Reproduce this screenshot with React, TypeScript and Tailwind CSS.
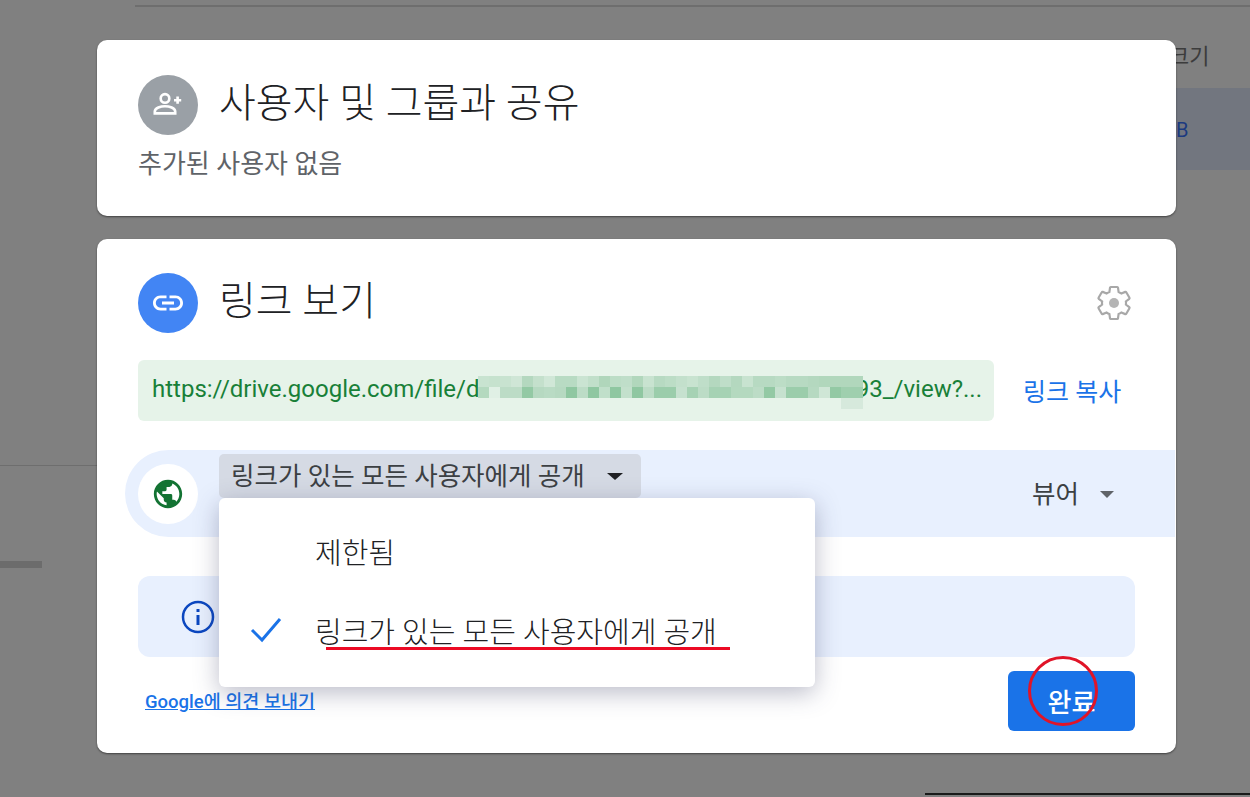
const FONT = 'font-["Roboto","Noto_Sans_CJK_KR",sans-serif]';

const mosaicTop = [
  '#c8e3d0', '#c6e2ce', '#c8e3d0', '#cfe6d6', '#b4d8bf', '#c4e0cc', '#d0e7d7', '#b8dbc3', '#b8dbc3', '#cae4d2', '#c1dfca', '#b0d6bb',
  '#bcddc6', '#bfdec9', '#b1d7bc', '#c8e3d0', '#b7dac2', '#bcddc6', '#c3e0cc', '#c8e3d0', '#bfdec9', '#b4d8bf', '#bfdec9', '#b4d8bf',
  '#c8e3d0', '#b7dac2', '#b7dac2', '#bcddc6', '#b7dac2', '#b7dac2', '#b4d8bf', '#b1d7bc', '#b1d7bc', '#b1d7bc', '#b1d7bc',
];
const mosaicBottom = [
  '#b4d9bf', '#e0f0e5', '#bcdcc6', '#bcdcc6', '#93c9a4', '#b6d9c1', '#b9dbc4', '#b6d9c1', '#8fc7a1', '#bcdcc6', '#8fc7a1', '#c0dfca',
  '#8fc7a1', '#c3e0cc', '#8fc7a1', '#bcdcc6', '#9bcdab', '#9bcdab', '#c6e1cf', '#a6d2b4', '#bcdcc6', '#a6d2b4', '#a6d2b4', '#b4d9bf',
  '#b4d9bf', '#bcdcc6', '#93c9a4', '#c6e1cf', '#9bcdab', '#9bcdab', '#b6d9c1', '#cfe6d6', '#93c9a4', '#9fcfae', '#9fcfae',
];

function Mosaic({ cells }: { cells: string[] }) {
  return (
    <div className="flex h-[11px]">
      {cells.map((c, i) => (
        <div key={i} className="w-[11px] shrink-0" style={{ backgroundColor: c }} />
      ))}
    </div>
  );
}

export default function App() {
  return (
    <div className={`relative h-[797px] w-[1250px] overflow-hidden bg-[#808080] ${FONT}`}>
      {/* page behind the dialog */}
      <div className="absolute left-[135px] right-0 top-[5px] h-[2px] bg-[#6e6e6e]" />
      <div className="absolute left-[1169px] top-[40px] text-[22px] text-[#3c3c3c]">크기</div>
      <div className="absolute left-[1176px] right-0 top-[88px] h-[82px] bg-[#72767f] pt-[27px] text-[20px] text-[#1c3a80]">B</div>
      <div className="absolute left-0 top-[465px] h-[1px] w-[97px] bg-[#6e6e6e]" />
      <div className="absolute left-0 top-[561px] h-[7px] w-[42px] bg-[#6c6c6c]" />
      <div className="absolute bottom-[2px] left-[925px] right-0 h-[2px] bg-[#1a1a1a]" />

      <div className="relative flex flex-col gap-[23px] pl-[97px] pt-[40px]">
        <section className="h-[176px] w-[1079px] rounded-[10px] bg-white px-[41px] pt-[35px] shadow-[0_1px_2px_rgba(0,0,0,0.5)]">
          <div className="flex items-center gap-[21px]">
            <div className="flex h-[60px] w-[60px] items-center justify-center rounded-full bg-[#9aa0a6]">
              <svg width="36" height="36" viewBox="0 0 30 30" fill="none" stroke="white" strokeWidth="2.200">
                <circle cx="12.5" cy="9.5" r="3.6" />
                <path d="M4 22v-1.5c0-3 5-4.500 8.500-4.500s8.500 1.500 8.500 4.500V22z" />
                <path d="M20 11h6M23 8v6" />
              </svg>
            </div>
            <h2 className="mb-[3px] text-[40px] leading-[50px] font-light text-[#202124]">사용자 및 그룹과 공유</h2>
          </div>
          <p className="mt-[15px] text-[26px] leading-[28px] text-[#5f6368]">추가된 사용자 없음</p>
        </section>

        <section className="relative h-[514px] w-[1079px] rounded-[10px] bg-white pt-[34px] shadow-[0_1px_2px_rgba(0,0,0,0.5)]">
          <div className="flex items-center pl-[41px] pr-[42px]">
            <div className="flex h-[60px] w-[60px] items-center justify-center rounded-full bg-[#4285f4]">
              <svg width="36" height="36" viewBox="0 0 24 24" fill="white">
                <path d="M3.900 12c0-1.710 1.390-3.100 3.100-3.100h4V7H7c-2.760 0-5 2.240-5 5s2.240 5 5 5h4v-1.900H7c-1.710 0-3.100-1.390-3.100-3.100zM8 13h8v-2H8v2zm9-6h-4v1.900h4c1.710 0 3.100 1.390 3.100 3.100s-1.390 3.100-3.100 3.100h-4V17h4c2.760 0 5-2.240 5-5s-2.240-5-5-5z" />
              </svg>
            </div>
            <h2 className="mb-[3px] ml-[21px] flex-1 text-[40px] leading-[50px] font-light text-[#202124]">링크 보기</h2>
            <svg className="ml-[1px]" width="40" height="40" viewBox="0 0 24 24" fill="none" stroke="#a8a8a8" strokeWidth="1.300">
              <path d="M19.140 12.940c.040-.300.060-.610.060-.940s-.020-.640-.070-.940l2.030-1.580a.49.490 0 0 0 .120-.610l-1.920-3.320a.49.490 0 0 0-.590-.220l-2.390.960a7.030 7.030 0 0 0-1.620-.940l-.360-2.540a.48.480 0 0 0-.480-.410h-3.840a.470.470 0 0 0-.470.410l-.360 2.540c-.590.240-1.130.570-1.620.940l-2.390-.960a.480.480 0 0 0-.590.220L2.740 8.870a.470.470 0 0 0 .120.610l2.030 1.580c-.050.300-.090.630-.090.940s.020.640.070.940l-2.030 1.580a.49.490 0 0 0-.120.610l1.920 3.320c.120.220.370.290.590.220l2.390-.960c.500.380 1.030.700 1.620.940l.360 2.540c.050.240.240.410.480.410h3.840c.240 0 .440-.170.470-.410l.360-2.540c.590-.240 1.130-.560 1.620-.940l2.390.960c.220.080.470 0 .590-.220l1.920-3.320a.470.470 0 0 0-.120-.610l-2.010-1.580z" />
              <circle cx="12" cy="12" r="3" fill="#b4b4b4" stroke="none" />
            </svg>
          </div>

          <div className="mt-[27px] flex items-center pl-[41px]">
            <div className="relative flex h-[61px] w-[856px] items-center overflow-hidden rounded-[6px] bg-[#e6f3e9] pb-[3px] pl-[14px] text-[24px] text-[#188038]">
              <span className="whitespace-nowrap">https://drive.google.com/file/d</span>
              <span className="absolute right-[12px] whitespace-nowrap">93_/view?...</span>
              <div className="absolute left-[340px] top-[16px]">
                <Mosaic cells={mosaicTop} />
                <Mosaic cells={mosaicBottom} />
                <div className="ml-[363px] h-[11px] w-[22px] bg-[#d6e9dc]" />
              </div>
            </div>
            <span className="ml-[29px] pt-[4px] text-[25px] text-[#1a73e8]">링크 복사</span>
          </div>

          <div className="relative ml-[28px] mr-[1px] mt-[29px] flex h-[87px] items-center rounded-l-[44px] bg-[#e8f0fe] pl-[13px]">
            <div className="flex h-[60px] w-[60px] items-center justify-center rounded-full bg-white">
              <svg width="34" height="34" viewBox="0 0 24 24" fill="#137333">
                <path d="M12 2C6.480 2 2 6.480 2 12s4.480 10 10 10 10-4.480 10-10S17.520 2 12 2zm-1 17.930c-3.950-.490-7-3.850-7-7.930 0-.620.080-1.210.210-1.790L9 15v1c0 1.100.900 2 2 2v1.930zm6.900-2.540c-.260-.810-1-1.390-1.900-1.390h-1v-3c0-.550-.450-1-1-1H8v-2h2c.550 0 1-.450 1-1V7h2c1.100 0 2-.900 2-2v-.410c2.930 1.190 5 4.060 5 7.410 0 2.080-.800 3.970-2.100 5.390z" />
              </svg>
            </div>
            <div className="mb-[35px] ml-[21px] flex h-[44px] w-[422px] items-center whitespace-nowrap rounded-[5px] bg-[#d5dae4] pl-[12px] text-[25.5px] text-[#3c4043]">
              <span>링크가 있는 모든 사용자에게 공개</span>
              <span className="ml-[22px] h-0 w-0 border-x-[8px] border-t-[7px] border-x-transparent border-t-[#202124]" />
            </div>
            <div className="ml-auto mr-[61px] flex items-center pt-[2px] text-[25.5px] text-[#3c4043]">
              뷰어
              <span className="ml-[21px] h-0 w-0 border-x-[7px] border-t-[7px] border-x-transparent border-t-[#5f6368]" />
            </div>
          </div>

          <div className="ml-[41px] mt-[39px] flex h-[81px] w-[997px] items-center rounded-[12px] bg-[#e8f0fe] pl-[42px]">
            <svg width="36" height="36" viewBox="0 0 36 36" fill="none" stroke="#0b47c0" strokeWidth="2.500">
              <circle cx="18" cy="18" r="15" />
              <path d="M18 16v10M18 10v3" strokeWidth="3" />
            </svg>
          </div>

          <div className="flex items-end justify-between pl-[48px] pr-[41px] pt-[14px]">
            <a className="mb-[17px] text-[18.5px] leading-[24px] font-medium text-[#1a73e8] underline">Google에 의견 보내기</a>
            <button className="flex h-[60px] w-[127px] items-center justify-center rounded-[6px] bg-[#1a73e8] pt-[5px] text-[26px] font-medium text-white">완료</button>
          </div>

          {/* open menu */}
          <div className="absolute left-[122px] top-[259px] h-[189px] w-[596px] rounded-[6px] bg-white pl-[96px] text-[29px] font-light text-[#202124] shadow-[0_6px_24px_rgba(60,64,100,0.35)]">
            <div className="flex h-[106px] items-center pt-[8px]">제한됨</div>
            <div className="relative flex h-[50px] items-center whitespace-nowrap pt-[10px]">
              <svg className="absolute left-[-66px] top-[9px]" width="34" height="34" viewBox="0 0 34 34" fill="none" stroke="#1a73e8" strokeWidth="3">
                <path d="M3 17l10 10L31 6" />
              </svg>
              링크가 있는 모든 사용자에게 공개
            </div>
          </div>
        </section>
      </div>

      {/* red marks drawn over the screenshot */}
      <div className="absolute left-[326px] top-[647px] h-[3px] w-[404px] bg-[#ec0a24]" />
      <div className="absolute left-[1028px] top-[656px] h-[70px] w-[70px] rounded-[50%] border-[3px] border-[#e01428]" />
    </div>
  );
}
